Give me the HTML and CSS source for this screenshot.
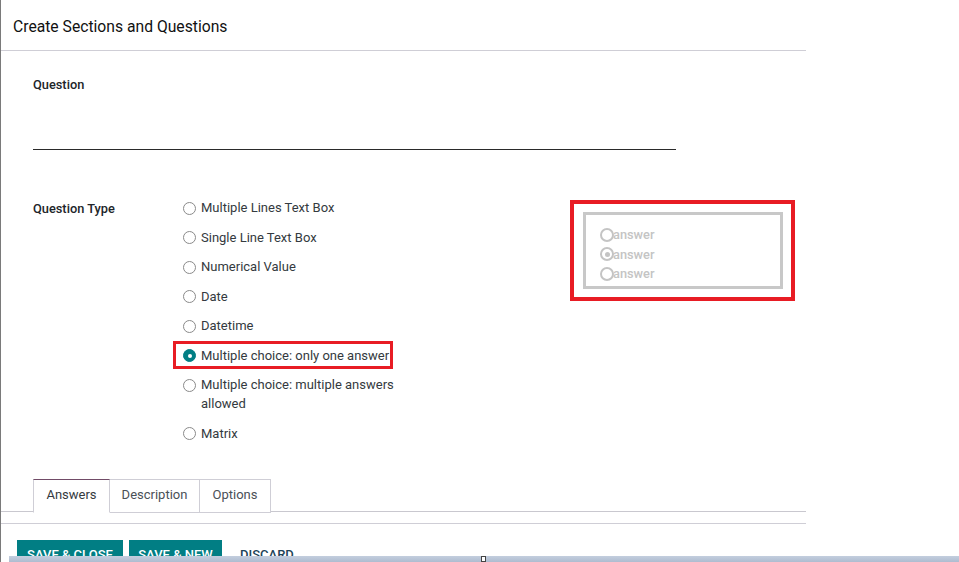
FILE: index.html
```html
<!DOCTYPE html>
<html>
<head>
<meta charset="utf-8">
<link rel="stylesheet" href="styles.css">
</head>
<body>
<div class="window">
  <div class="modal">
    <header class="modal-header">
      <h4 class="modal-title">Create Sections and Questions</h4>
    </header>
    <main class="modal-body">
      <div class="field-question">
        <label class="field-label">Question</label>
        <div class="title-input"></div>
      </div>
      <div class="type-row">
        <label class="field-label type-label">Question Type</label>
        <ul class="options">
          <li class="option"><span class="radio"></span><span class="opt-text">Multiple Lines Text Box</span></li>
          <li class="option"><span class="radio"></span><span class="opt-text">Single Line Text Box</span></li>
          <li class="option"><span class="radio"></span><span class="opt-text">Numerical Value</span></li>
          <li class="option"><span class="radio"></span><span class="opt-text">Date</span></li>
          <li class="option"><span class="radio"></span><span class="opt-text">Datetime</span></li>
          <li class="option"><span class="highlight"><span class="radio checked"></span><span class="opt-text">Multiple choice: only one answer</span></span></li>
          <li class="option"><span class="radio"></span><span class="opt-text">Multiple choice: multiple answers allowed</span></li>
          <li class="option"><span class="radio"></span><span class="opt-text">Matrix</span></li>
        </ul>
        <div class="preview-frame">
          <div class="preview">
            <div class="p-line"><span class="p-radio"></span>answer</div>
            <div class="p-line"><span class="p-radio on"></span>answer</div>
            <div class="p-line"><span class="p-radio"></span>answer</div>
          </div>
        </div>
      </div>
      <nav class="tabs">
        <span class="tab-spacer"></span>
        <span class="tab active">Answers</span>
        <span class="tab">Description</span>
        <span class="tab">Options</span>
        <span class="tab-fill"></span>
      </nav>
    </main>
    <footer class="modal-footer">
      <button class="btn btn-primary">SAVE &amp; CLOSE</button>
      <button class="btn btn-primary">SAVE &amp; NEW</button>
      <button class="btn btn-link">DISCARD</button>
    </footer>
  </div>
  <div class="bottom-bar"><span class="grip"></span></div>
</div>
</body>
</html>
```

FILE: styles.css
```css
html, body {
  margin: 0;
  padding: 0;
  background: #ffffff;
  overflow: hidden;
}
body {
  font-family: Roboto, "Liberation Sans", Arial, sans-serif;
  color: #212529;
}
.window {
  position: relative;
  width: 959px;
  height: 562px;
  overflow: hidden;
  background: #ffffff;
}
.modal {
  width: 805px;
  height: 562px;
  border-left: 1px solid #7a7a7a;
  background: #fff;
}
.modal-header {
  height: 50px;
  border-bottom: 1px solid #cfced6;
  display: flex;
  align-items: center;
  padding-left: 12px;
}
.modal-title {
  margin: 0;
  font-size: 15.7px;
  font-weight: 400;
  color: #111;
  position: relative;
  top: 1px;
}
.field-question {
  padding: 25px 129px 0 32px;
}
.field-label {
  display: block;
  font-size: 12.8px;
  font-weight: 500;
  color: #212529;
  line-height: 17px;
}
.title-input {
  margin-top: 56px;
  height: 0;
  border-bottom: 1px solid #2a2a2a;
  width: 643px;
}
.type-row {
  display: flex;
  align-items: flex-start;
  padding: 48px 0 0 32px;
}
.type-label {
  width: 150px;
  flex: none;
  padding-top: 2px;
}
.options {
  list-style: none;
  margin: 0;
  padding: 0;
  width: 222px;
  flex: none;
}
.option {
  display: flex;
  align-items: flex-start;
  font-size: 13px;
  line-height: 19px;
  color: #343a40;
  margin-bottom: 10.5px;
}
.highlight {
  position: relative;
  display: flex;
  align-items: flex-start;
}
.highlight::after {
  content: "";
  position: absolute;
  left: -10px;
  right: -4px;
  top: -5px;
  bottom: -4px;
  border: 3px solid #e81c24;
}
.radio {
  flex: none;
  width: 11px;
  height: 11px;
  border: 1px solid #8a8a8a;
  border-radius: 50%;
  margin-top: 3.5px;
  margin-right: 5px;
  box-sizing: content-box;
  background: #fff;
}
.radio.checked {
  border-color: #017e84;
  background: #017e84;
  position: relative;
}
.radio.checked::before {
  content: "";
  position: absolute;
  left: 3.5px;
  top: 3.5px;
  width: 4px;
  height: 4px;
  border-radius: 50%;
  background: #fff;
}
.preview-frame {
  margin-left: 165px;
  margin-top: 2px;
  border: 4px solid #e81c24;
  padding: 8px 8px 8px 9px;
  width: 200px;
  flex: none;
}
.preview {
  border: 3px solid #c8c8c8;
  padding: 10px 0 0 14px;
  box-sizing: border-box;
  height: 77px;
}
.p-line {
  display: flex;
  align-items: center;
  font-size: 12.8px;
  line-height: 19.5px;
  color: #c4c4c4;
  font-weight: 500;
}
.p-radio {
  width: 10px;
  height: 10px;
  border: 2.5px solid #c4c4c4;
  border-radius: 50%;
  position: relative;
  margin-right: -1px;
}
.p-radio.on::after {
  content: "";
  position: absolute;
  left: 2.5px;
  top: 2.5px;
  width: 5px;
  height: 5px;
  border-radius: 50%;
  background: #c4c4c4;
}
.tabs {
  display: flex;
  margin-top: 26px;
  height: 33px;
}
.tab-spacer {
  width: 32px;
  border-bottom: 1px solid #c9c8cf;
}
.tab {
  display: flex;
  align-items: center;
  justify-content: center;
  font-size: 13px;
  color: #4a5057;
  border: 1px solid #cfced6;
  border-left: none;
  box-sizing: border-box;
  height: 34px;
  padding-bottom: 3px;
}
.tab:nth-child(2) { width: 77px; }
.tab:nth-child(3) { width: 90px; }
.tab:nth-child(4) { width: 71px; }
.tab.active {
  border-left: 1px solid #cfced6;
  border-top: 1px solid #714b67;
  border-bottom: 1px solid #fff;
  color: #343a40;
}
.tab-fill {
  flex: 1;
  border-bottom: 1px solid #c9c8cf;
}
.modal-footer {
  margin-top: 11px;
  border-top: 1px solid #cfced6;
  display: flex;
  gap: 6px;
  padding: 16px 0 0 16px;
}
.btn {
  font-family: Roboto, "Liberation Sans", Arial, sans-serif;
  font-size: 13px;
  font-weight: 500;
  border: none;
  padding: 0;
  height: 30px;
  line-height: 30px;
  cursor: pointer;
}
.btn-primary {
  background: #017e84;
  color: #fff;
}
.btn-primary:first-child { width: 106px; }
.btn-primary:nth-child(2) { width: 93px; }
.btn-link {
  background: transparent;
  color: #1d4458;
  padding: 0 12px;
}
.bottom-bar {
  position: absolute;
  left: 9px;
  right: 0;
  bottom: 0;
  height: 6px;
  background: linear-gradient(#c3cede, #aebcd0);
}
.grip {
  position: absolute;
  left: 472px;
  top: 0;
  width: 3px;
  height: 4px;
  border: 1px solid #444;
  background: #fff;
}
```
